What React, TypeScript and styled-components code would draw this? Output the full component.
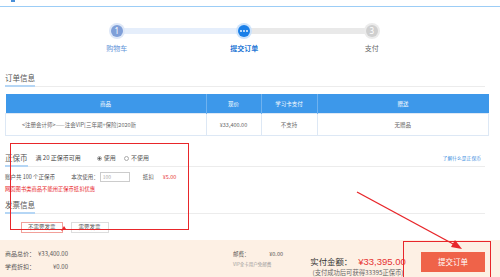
import styled, { createGlobalStyle } from 'styled-components';

const GlobalStyle = createGlobalStyle`
  html, body {
    margin: 0;
    padding: 0;
    background: #fff;
  }
  body {
    font-family: "Noto Sans CJK SC", "Noto Sans", sans-serif;
    color: #555;
  }
`;

type StepState = 'done' | 'active' | 'todo';

const steps: { label: string; state: StepState; mark: string }[] = [
  { label: '购物车', state: 'done', mark: '1' },
  { label: '提交订单', state: 'active', mark: '' },
  { label: '支付', state: 'todo', mark: '3' }
];

const columns = [
  { title: '商品', width: 200, align: 'left' as const },
  { title: '现价', width: 54, align: 'center' as const },
  { title: '学习卡支付', width: 55, align: 'center' as const },
  { title: '赠送', width: 171, align: 'center' as const }
];

const row = ['<注册会计师>——注会VIP[三年期+保险]2020新', '¥33,400.00', '不支持', '无赠品'];

export default function App() {
  return (
    <>
      <GlobalStyle />
      <Page>
        <TopBar>
          <LogoMark />
        </TopBar>

        <Steps>
          {steps.map((s, i) => (
            <Step key={s.label} $state={s.state} $last={i === steps.length - 1}>
              <StepDot $state={s.state}>
                {s.state === 'active' ? (
                  <svg width="8" height="2" viewBox="0 0 8 2">
                    <circle cx="1" cy="1" r="0.9" fill="#fff" />
                    <circle cx="4" cy="1" r="0.9" fill="#fff" />
                    <circle cx="7" cy="1" r="0.9" fill="#fff" />
                  </svg>
                ) : (
                  s.mark
                )}
              </StepDot>
              <StepLabel $state={s.state}>{s.label}</StepLabel>
            </Step>
          ))}
        </Steps>

        <Content>
          <SectionHeader $top={19}>
            <SectionTitle>订单信息</SectionTitle>
          </SectionHeader>
          <OrderTable>
            <thead>
              <tr>
                {columns.map(c => (
                  <HeadCell key={c.title} style={{ width: c.width }}>
                    {c.title}
                  </HeadCell>
                ))}
              </tr>
            </thead>
            <tbody>
              <tr>
                {row.map((text, i) => (
                  <BodyCell key={i} $align={columns[i].align}>
                    {text}
                  </BodyCell>
                ))}
              </tr>
            </tbody>
          </OrderTable>

          <SectionHeader $top={16}>
            <SectionTitle>正保币</SectionTitle>
            <CoinHint>满 20 正保币可用</CoinHint>
            <RadioItem>
              <Radio $checked />
              使用
            </RadioItem>
            <RadioItem>
              <Radio />
              不使用
            </RadioItem>
            <HelpLink>了解什么是正保币</HelpLink>
          </SectionHeader>
          <CoinRow>
            <span>账户共 100 个正保币</span>
            <UseLabel>本次使用：</UseLabel>
            <CoinInput>100</CoinInput>
            <DeductLabel>抵扣</DeductLabel>
            <RedText>¥5.00</RedText>
          </CoinRow>
          <Warning>网页图书类商品不能用正保币抵扣优惠</Warning>

          <SectionHeader $top={5}>
            <SectionTitle>发票信息</SectionTitle>
          </SectionHeader>
          <InvoiceRow>
            <InvoiceButton $selected>不需要发票</InvoiceButton>
            <InvoiceButton>需要发票</InvoiceButton>
          </InvoiceRow>
        </Content>

        <Footer>
          <PriceGrid>
            <span>商品总价：</span>
            <PriceValue>¥33,400.00</PriceValue>
            <span>学费折扣：</span>
            <PriceValue>¥0.00</PriceValue>
          </PriceGrid>
          <Postage>
            <PostageLine>
              <span>邮费：</span>
              <span>¥0.00</span>
            </PostageLine>
            <PostageNote>VIP全卡用户免邮费</PostageNote>
          </Postage>
          <Total>
            <TotalLine>
              <span>实付金额：</span>
              <TotalAmount>¥33,395.00</TotalAmount>
            </TotalLine>
            <TotalNote>(支付成功后可获得33395正保币)</TotalNote>
          </Total>
          <SubmitButton>提交订单</SubmitButton>
        </Footer>

        <Highlight style={{ left: 10, top: 143, width: 179, height: 87 }} />
        <Highlight style={{ left: 403, top: 241, width: 88, height: 44 }} />
        <Arrow width="500" height="277" viewBox="0 0 500 277">
          <line x1="357" y1="192" x2="455" y2="245" stroke="#e8262a" strokeWidth="1.4" />
          <polygon points="462,249 451,247 455,240" fill="#e8262a" />
          <polygon points="66,229 61,231 64,226" fill="#e8262a" />
        </Arrow>
      </Page>
    </>
  );
}

const Page = styled.div`
  position: relative;
  width: 500px;
  height: 277px;
  overflow: hidden;
  background: #fff;
`;

const TopBar = styled.div`
  height: 6px;
  border-bottom: 1px solid #9ccdf6;
  padding-left: 11px;
`;

const LogoMark = styled.div`
  width: 4px;
  height: 2px;
  background: #4a90d9;
`;

const Steps = styled.div`
  display: flex;
  padding: 18px 0 0 53px;
`;

const Step = styled.div<{ $state: StepState; $last: boolean }>`
  position: relative;
  width: 127.5px;
  display: flex;
  flex-direction: column;
  align-items: center;

  &::after {
    content: '';
    display: ${p => (p.$last ? 'none' : 'block')};
    position: absolute;
    top: 3px;
    left: 64px;
    width: 127.5px;
    height: 6px;
    background: ${p => (p.$state === 'done' ? '#e5eefb' : '#e9e9e9')};
    z-index: 0;
  }
`;

const dotColor = { done: '#7f9fd8', active: '#1a7fe8', todo: '#cfcfcf' };
const haloColor = { done: '#dde7f7', active: '#cde3fb', todo: '#ebebeb' };

const StepDot = styled.div<{ $state: StepState }>`
  position: relative;
  z-index: 1;
  width: 12px;
  height: 12px;
  border-radius: 50%;
  background: ${p => dotColor[p.$state]};
  box-shadow: 0 0 0 2px ${p => haloColor[p.$state]};
  display: flex;
  align-items: center;
  justify-content: center;
  color: #fff;
  font-size: 8px;
  font-family: "Noto Sans", sans-serif;
  line-height: 1;
`;

const StepLabel = styled.div<{ $state: StepState }>`
  margin-top: 6px;
  font-size: 7px;
  line-height: 10px;
  color: ${p =>
    p.$state === 'done' ? '#5f93d8' : p.$state === 'active' ? '#1b75d5' : '#666'};
  font-weight: ${p => (p.$state === 'active' ? 700 : 400)};
`;

const Content = styled.div`
  padding: 0 15px 0 5px;
`;

const SectionHeader = styled.div<{ $top: number }>`
  display: flex;
  align-items: flex-end;
  margin-top: ${p => p.$top}px;
  border-bottom: 1px solid #ececec;
  font-size: 6px;
  line-height: 12px;
`;

const SectionTitle = styled.div`
  font-size: 7.5px;
  line-height: 12px;
  color: #555;
  padding-bottom: 1px;
  border-bottom: 2px solid #b5d6f5;
  margin-bottom: -1px;
`;

const OrderTable = styled.table`
  margin-top: 7px;
  width: 480px;
  border-collapse: collapse;
  table-layout: fixed;
`;

const HeadCell = styled.th`
  height: 19px;
  padding: 0;
  background: #3d98ea;
  color: #fff;
  font-size: 5.5px;
  font-weight: 400;
  text-align: center;
  border-right: 1px solid #6fb2ef;

  &:last-child {
    border-right: none;
  }
`;

const BodyCell = styled.td<{ $align: 'left' | 'center' }>`
  height: 21px;
  padding: 0 0 0 ${p => (p.$align === 'left' ? '16px' : '0')};
  font-size: 5.5px;
  color: #666;
  text-align: ${p => p.$align};
  border: 1px solid #dde8f5;
  white-space: nowrap;
`;

const CoinHint = styled.span`
  margin-left: 8px;
  padding-bottom: 2px;
  color: #444;
`;

const RadioItem = styled.span`
  display: flex;
  align-items: center;
  gap: 2px;
  margin-left: 16px;
  padding-bottom: 2px;
  color: #555;

  & + & {
    margin-left: 8px;
  }
`;

const Radio = styled.span<{ $checked?: boolean }>`
  width: 3px;
  height: 3px;
  border-radius: 50%;
  border: 0.5px solid #aaa;
  background: ${p => (p.$checked ? 'radial-gradient(#555 45%, #fff 55%)' : '#fff')};
`;

const HelpLink = styled.span`
  margin-left: auto;
  padding: 0 4px 2px 0;
  font-size: 4.8px;
  color: #3d8fe0;
`;

const CoinRow = styled.div`
  display: flex;
  align-items: center;
  height: 10px;
  margin-top: 5px;
  font-size: 5.5px;
  color: #555;
`;

const UseLabel = styled.span`
  margin-left: 16px;
`;

const CoinInput = styled.span`
  margin-left: 1px;
  width: 26px;
  height: 8px;
  line-height: 8px;
  padding-left: 2px;
  border: 0.5px solid #ccc;
  color: #aaa;
  font-size: 5px;
`;

const DeductLabel = styled.span`
  margin-left: 13px;
`;

const RedText = styled.span`
  margin-left: 9px;
  color: #e83a3a;
`;

const Warning = styled.div`
  margin-top: 2px;
  font-size: 5.3px;
  line-height: 10px;
  color: #e8262a;
`;

const InvoiceRow = styled.div`
  display: flex;
  gap: 8px;
  margin-top: 8px;
  padding-left: 16px;
`;

const InvoiceButton = styled.div<{ $selected?: boolean }>`
  height: 9px;
  line-height: 9px;
  padding: 0 ${p => (p.$selected ? '6px' : '7px')};
  font-size: 5.5px;
  color: #555;
  border: 0.5px solid ${p => (p.$selected ? '#f2a09a' : '#ddd')};
`;

const Footer = styled.div`
  display: flex;
  margin-top: 7px;
  height: 50px;
  padding-left: 5px;
  background: #fdf0e4;
  font-size: 6px;
  color: #555;
`;

const PriceGrid = styled.div`
  display: grid;
  grid-template-columns: 33px 30px;
  grid-auto-rows: 10px;
  row-gap: 3px;
  align-items: center;
  width: 228px;
  padding-top: 9px;
  line-height: 10px;
`;

const PriceValue = styled.span`
  text-align: right;
`;

const Postage = styled.div`
  width: 50px;
  padding-top: 9px;
  margin-right: 22px;
`;

const PostageLine = styled.div`
  display: flex;
  justify-content: space-between;
  line-height: 10px;
  font-size: 5.5px;
`;

const PostageNote = styled.div`
  font-size: 4.5px;
  line-height: 10px;
  color: #999;
`;

const Total = styled.div`
  width: 106px;
  display: flex;
  flex-direction: column;
  align-items: center;
  padding-top: 15px;
`;

const TotalLine = styled.div`
  display: flex;
  align-items: baseline;
  gap: 6px;
  line-height: 12px;
  font-size: 8.4px;
  color: #333;
`;

const TotalAmount = styled.span`
  color: #e63232;
  font-family: "Liberation Sans", sans-serif;
  font-size: 9.5px;
`;

const TotalNote = styled.div`
  margin-top: 0;
  font-size: 6.3px;
  line-height: 10px;
  color: #666;
  white-space: nowrap;
`;

const SubmitButton = styled.div`
  margin: 12px 0 0 10px;
  width: 64px;
  height: 20px;
  line-height: 20px;
  text-align: center;
  background: #ef6349;
  color: #fff;
  font-size: 7.5px;
`;

const Highlight = styled.div`
  position: absolute;
  border: 1.5px solid #e8262a;
  box-sizing: border-box;
  pointer-events: none;
`;

const Arrow = styled.svg`
  position: absolute;
  left: 0;
  top: 0;
  pointer-events: none;
`;
